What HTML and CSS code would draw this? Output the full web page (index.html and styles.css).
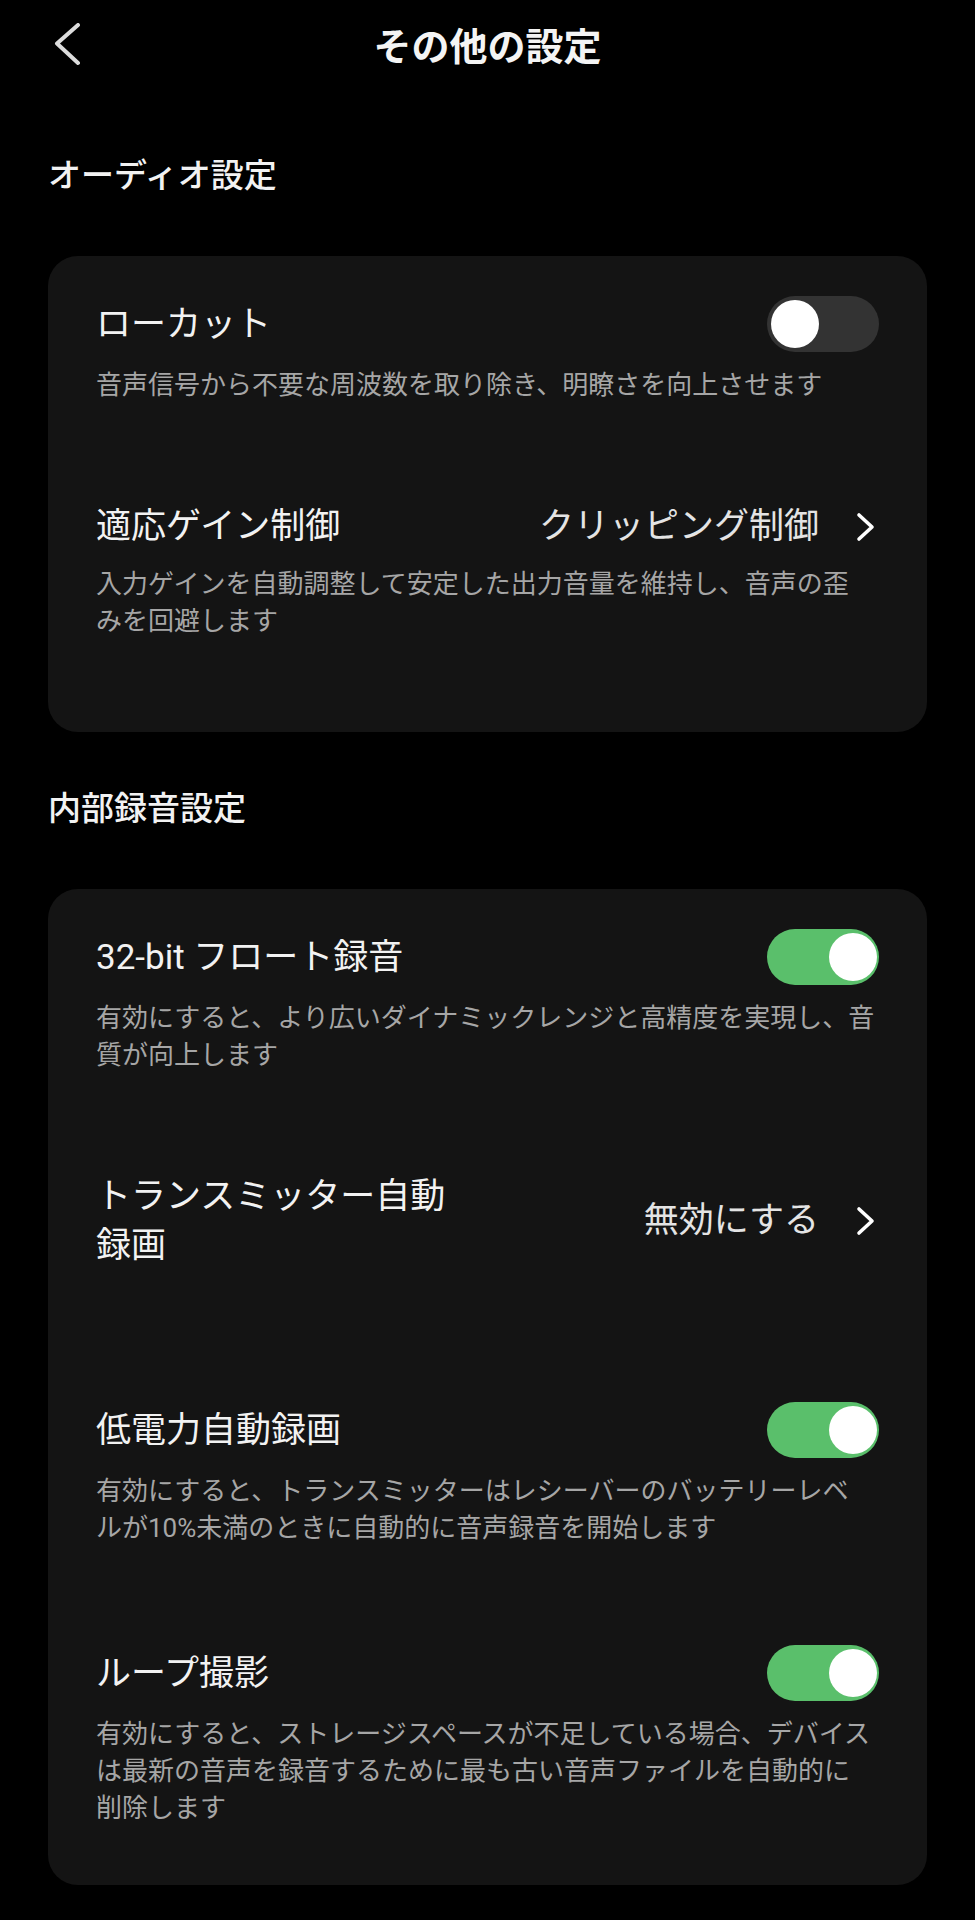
FILE: index.html
```html
<!DOCTYPE html>
<html lang="ja">
<head>
    <meta charset="UTF-8">
    <meta name="viewport" content="width=device-width, initial-scale=1.0">
    <title>その他の設定</title>
    <link rel="stylesheet" href="styles.css">
</head>
<body>
    <header class="topbar">
        <a href="#" class="back-btn" aria-label="戻る">
            <svg width="36" height="48" viewBox="0 0 36 48"><path d="M30 2 L9 20.5 L30 40" fill="none" stroke="#dcdcdc" stroke-width="4" stroke-linecap="round" stroke-linejoin="round"/></svg>
        </a>
        <h1 class="page-title">その他の設定</h1>
        <div></div>
    </header>

    <main>
        <h2 class="section-title first">オーディオ設定</h2>
        <section class="card">
            <div class="row">
                <div class="row-head">
                    <span class="row-title">ローカット</span>
                    <span class="switch"><span class="knob"></span></span>
                </div>
                <p class="row-desc">音声信号から不要な周波数を取り除き、明瞭さを向上させます</p>
            </div>
            <div class="row link-row">
                <div class="row-head">
                    <span class="row-title">適応ゲイン制御</span>
                    <span class="row-value">クリッピング制御
                        <svg class="chevron" width="24" height="30" viewBox="0 0 24 30"><path d="M4 3 L17 15 L4 27" fill="none" stroke="#fff" stroke-width="3.6" stroke-linecap="round" stroke-linejoin="round"/></svg>
                    </span>
                </div>
                <p class="row-desc">入力ゲインを自動調整して安定した出力音量を維持し、音声の歪<br>みを回避します</p>
            </div>
        </section>

        <h2 class="section-title">内部録音設定</h2>
        <section class="card">
            <div class="row">
                <div class="row-head">
                    <span class="row-title">32-bit フロート録音</span>
                    <span class="switch on"><span class="knob"></span></span>
                </div>
                <p class="row-desc">有効にすると、より広いダイナミックレンジと高精度を実現し、音<br>質が向上します</p>
            </div>
            <div class="row link-row">
                <div class="row-head">
                    <span class="row-title narrow">トランスミッター自動<br>録画</span>
                    <span class="row-value">無効にする
                        <svg class="chevron" width="24" height="30" viewBox="0 0 24 30"><path d="M4 3 L17 15 L4 27" fill="none" stroke="#fff" stroke-width="3.6" stroke-linecap="round" stroke-linejoin="round"/></svg>
                    </span>
                </div>
            </div>
            <div class="row">
                <div class="row-head">
                    <span class="row-title">低電力自動録画</span>
                    <span class="switch on"><span class="knob"></span></span>
                </div>
                <p class="row-desc">有効にすると、トランスミッターはレシーバーのバッテリーレベ<br>ルが10%未満のときに自動的に音声録音を開始します</p>
            </div>
            <div class="row">
                <div class="row-head">
                    <span class="row-title">ループ撮影</span>
                    <span class="switch on"><span class="knob"></span></span>
                </div>
                <p class="row-desc">有効にすると、ストレージスペースが不足している場合、デバイス<br>は最新の音声を録音するために最も古い音声ファイルを自動的に<br>削除します</p>
            </div>
        </section>
    </main>
</body>
</html>
```

FILE: styles.css
```css
/* base */
body {
    margin: 0;
    padding: 0;
    background-color: #000;
    color: #f2f2f2;
    font-family: Roboto, "Noto Sans CJK JP", sans-serif;
}

/* top bar */
.topbar {
    display: grid;
    grid-template-columns: 1fr auto 1fr;
    align-items: center;
    padding: 20px 48px 0;
}
.back-btn {
    display: flex;
    width: 36px;
    height: 48px;
}
.page-title {
    margin: 0;
    font-size: 38px;
    line-height: 54px;
    font-weight: 700;
    color: #f4f4f4;
}

/* sections */
.section-title {
    margin: 55px 0 58px;
    padding: 0 48px;
    font-size: 33px;
    line-height: 44px;
    font-weight: 500;
    color: #f2f2f2;
}
.section-title.first {
    margin-top: 80px;
}

.card {
    margin: 0 48px;
    padding: 40px 48px 58px;
    background-color: #141414;
    border-radius: 30px;
    display: flex;
    flex-direction: column;
    gap: 98px;
}

/* rows */
.row-head {
    display: flex;
    justify-content: space-between;
    align-items: center;
    min-height: 48px;
}
.row-title {
    font-size: 35px;
    line-height: 49px;
    color: #f2f2f2;
}
.row-title.narrow {
    max-width: 380px;
}
.row-value {
    display: flex;
    align-items: center;
    font-size: 35px;
    line-height: 48px;
    color: #e4e4e4;
}
.chevron {
    margin-left: 36px;
}
.link-row {
    padding-bottom: 34px;
}
.row-desc {
    margin: 15px 0 0;
    font-size: 26px;
    line-height: 37px;
    color: #a6a6a6;
    white-space: nowrap;
}

/* toggle switch */
.switch {
    display: flex;
    align-items: center;
    justify-content: flex-start;
    box-sizing: border-box;
    width: 112px;
    height: 56px;
    padding: 0 4px;
    border-radius: 28px;
    background-color: #333;
}
.switch.on {
    justify-content: flex-end;
    padding: 0 2px;
    background-color: #5abf6b;
}
.knob {
    width: 48px;
    height: 48px;
    border-radius: 50%;
    background-color: #fff;
}
```
